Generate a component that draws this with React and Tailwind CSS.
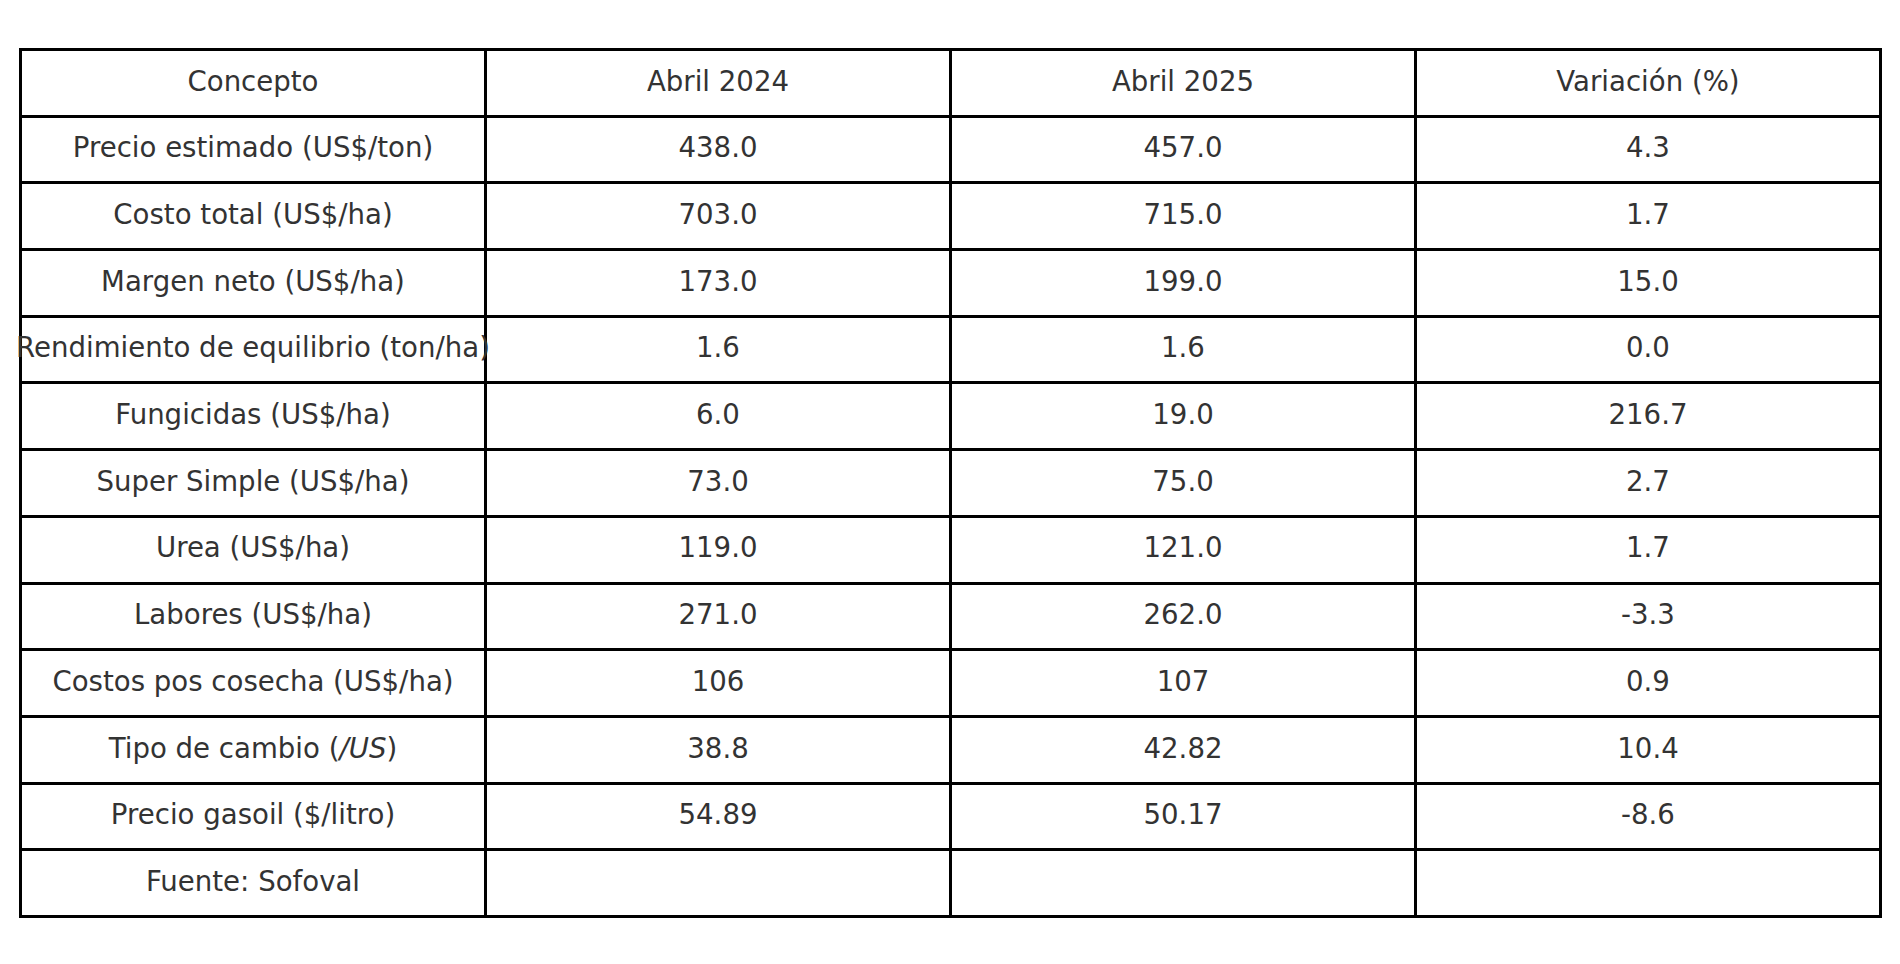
const rows = [
  ['Concepto', 'Abril 2024', 'Abril 2025', 'Variación (%)'],
  ['Precio estimado (US$/ton)', '438.0', '457.0', '4.3'],
  ['Costo total (US$/ha)', '703.0', '715.0', '1.7'],
  ['Margen neto (US$/ha)', '173.0', '199.0', '15.0'],
  ['Rendimiento de equilibrio (ton/ha)', '1.6', '1.6', '0.0'],
  ['Fungicidas (US$/ha)', '6.0', '19.0', '216.7'],
  ['Super Simple (US$/ha)', '73.0', '75.0', '2.7'],
  ['Urea (US$/ha)', '119.0', '121.0', '1.7'],
  ['Labores (US$/ha)', '271.0', '262.0', '-3.3'],
  ['Costos pos cosecha (US$/ha)', '106', '107', '0.9'],
  [
    <>
      Tipo de cambio (<i>/US</i>)
    </>,
    '38.8',
    '42.82',
    '10.4',
  ],
  ['Precio gasoil ($/litro)', '54.89', '50.17', '-8.6'],
  ['Fuente: Sofoval', '', '', ''],
];

export default function App() {
  return (
    <div className="w-[1900px] h-[964px] bg-white pt-[48px] pl-[19px] font-['DejaVu_Sans',sans-serif] text-[#333333]">
      {/* matplotlib-style table */}
      <div className="grid w-[1863px] h-[870px] grid-cols-4 grid-rows-13 border-t-3 border-l-3 border-black">
        {rows.map((row, r) =>
          row.map((cell, c) => (
            <div
              key={`${r}-${c}`}
              className="flex items-center justify-center border-r-3 border-b-3 border-black pb-[3px] text-[27.6px] whitespace-nowrap overflow-visible"
            >
              {cell}
            </div>
          ))
        )}
      </div>
    </div>
  );
}
